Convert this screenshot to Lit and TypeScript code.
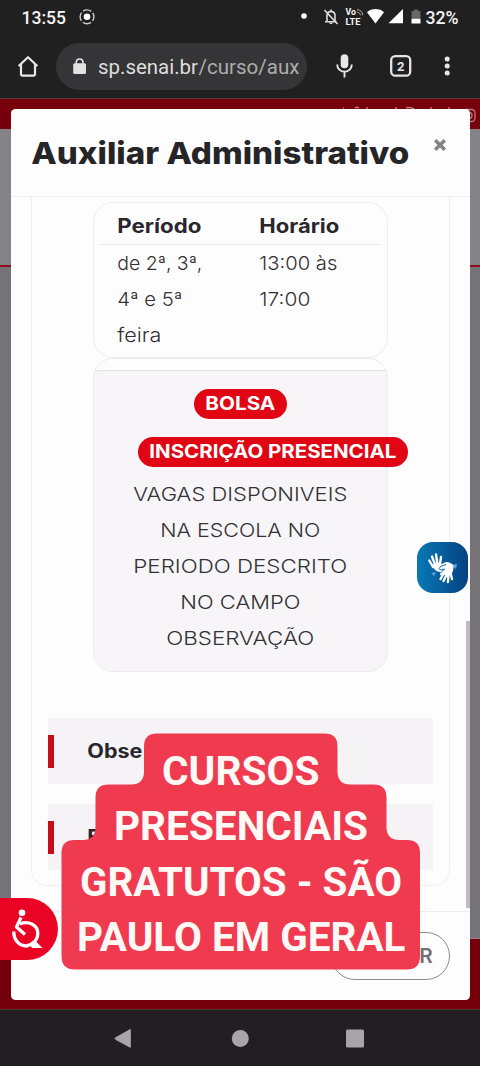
import { LitElement, html, svg, css } from "lit";
import { customElement } from "lit/decorators.js";

// One line of type set to an exact measure; `base` is the baseline inside the line box.
const line = (text: string, width: number, height: number, base: number, cls: string) => html`
  <svg class="line ${cls}" width=${width} height=${height}>
    <text x="-0.7" y=${base} textLength=${width + 1} lengthAdjust="spacingAndGlyphs">${text}</text>
  </svg>`;

@customElement("status-bar")
class StatusBar extends LitElement {
  static styles = css`
    :host { display: block; height: 33px; }
    svg { display: block; }
    text { font-family: Roboto, sans-serif; fill: #f4f4f4; }
    .clock { font-size: 18px; font-weight: 500; }
    .tiny { font-size: 9px; font-weight: 700; }
  `;
  render() {
    return html`<svg width="480" height="33" viewBox="0 0 480 33">
      <text class="clock" x="21.5" y="23.5" textLength="44.5" lengthAdjust="spacingAndGlyphs">13:55</text>
      <circle cx="87" cy="16.8" r="3.3" fill="#fff" />
      <circle cx="87" cy="16.8" r="6.9" fill="none" stroke="#cecece" stroke-width="1.4" stroke-dasharray="8.8 2.04" stroke-dashoffset="4.4" />
      <circle cx="304" cy="16" r="2.8" fill="#fff" />
      <g fill="none" stroke="#dcdcdc" stroke-width="1.6">
        <path d="M327 21.5V15.5C327 12.7 328.7 11.7 331 11.4C333.4 11.7 335 12.9 335 15.5V21.5M325 21.7H336.5M331 9.5V11.5" />
        <path d="M324.5 10L337.5 24" />
      </g>
      <path d="M329.3 22.5h3.4a1.7 1.7 0 0 1-3.4 0z" fill="#dcdcdc" />
      <text class="tiny" x="345.5" y="15" textLength="10.5" lengthAdjust="spacingAndGlyphs">Vo</text>
      <text class="tiny" x="345.5" y="24.9" textLength="15" lengthAdjust="spacingAndGlyphs">LTE</text>
      <path d="M357 9.7c3.3 0 5.6 2.2 5.8 5.6M357 12.2c2 0 3.2 1.2 3.4 3.1" fill="none" stroke="#aaa" stroke-width="1" />
      <path d="M367 12.2C371.5 8 379.5 8 384 12.2L375.5 23.5z" fill="#fff" />
      <path d="M403 9V23.3H388.5z" fill="#fff" />
      <path d="M411.5 11h2.5v-1.5h4V11h2.5v8h-9z" fill="#666" />
      <path d="M411.5 18.8h9v4.7h-9z" fill="#fff" />
      <text class="clock" x="425.5" y="23.5" textLength="33" lengthAdjust="spacingAndGlyphs">32%</text>
    </svg>`;
  }
}

@customElement("browser-bar")
class BrowserBar extends LitElement {
  static styles = css`
    :host { display: flex; height: 65px; box-sizing: border-box; padding: 10px 0 0 14px; align-items: flex-start; }
    svg { display: block; flex: none; }
    .address {
      flex: none; display: flex; box-sizing: border-box; width: 251px; height: 47px; margin: 0 24px 0 14px;
      padding-left: 16px; border-radius: 24px; background: #353537;
    }
    .address svg { overflow: hidden; }
    text { font: 20.5px Roboto, sans-serif; fill: #dedede; }
    .path { fill: #adadad; }
    .count { font-size: 13px; font-weight: 700; fill: #e5e5e5; }
  `;
  render() {
    return html`
      <svg width="28" height="47" viewBox="14 43 28 47">
        <path d="M18.6 66L28 57.2L37.4 66M21 64.5V74.3Q21 75.6 22.3 75.6H33.7Q35 75.6 35 74.3V64.5" fill="none" stroke="#e8e8e8" stroke-width="2.2" stroke-linejoin="round" />
      </svg>
      <div class="address">
        <svg width="26" height="47" viewBox="72 43 26 47">
          <rect x="73.2" y="63.3" width="12.8" height="10.7" rx="1.5" fill="#e2e2e2" />
          <path d="M76.3 64V62.3a3.3 3.3 0 0 1 6.6 0V64" fill="none" stroke="#e2e2e2" stroke-width="1.6" />
        </svg>
        <svg width="201" height="47" viewBox="98 43 201 47">
          <text x="98" y="74" textLength="100" lengthAdjust="spacingAndGlyphs">sp.senai.br</text>
          <text class="path" x="198.5" y="74" textLength="101" lengthAdjust="spacingAndGlyphs">/curso/aux</text>
        </svg>
      </div>
      <svg width="149" height="47" viewBox="331 43 149 47">
        <rect x="340.7" y="54.3" width="7.6" height="14" rx="3.8" fill="#e8e8e8" />
        <path d="M337.2 64.5a7.3 7.3 0 0 0 14.6 0M344.5 71.8V77.5" fill="none" stroke="#e8e8e8" stroke-width="1.9" />
        <rect x="391.2" y="56.2" width="19" height="19.5" rx="4" fill="none" stroke="#e5e5e5" stroke-width="2.3" />
        <text class="count" x="397" y="70.8">2</text>
        <g fill="#e8e8e8"><circle cx="447.2" cy="59" r="2.5" /><circle cx="447.2" cy="66" r="2.5" /><circle cx="447.2" cy="73" r="2.5" /></g>
      </svg>`;
  }
}

@customElement("course-modal")
class CourseModal extends LitElement {
  static styles = css`
    :host {
      display: flex; flex-direction: column; box-sizing: border-box;
      border-radius: 4.5px; background: #fefdfe; overflow: hidden;
    }
    .line { display: block; overflow: visible; flex: none; }
    text { font-family: Inter, "Open Sans", sans-serif; }
    .title { font-size: 30px; font-weight: 800; fill: #252427; }
    .bold { font-size: 19.5px; font-weight: 700; fill: #29272b; }
    .body { font-size: 19.3px; font-weight: 300; fill: #333135; }
    .chip { font-size: 18.6px; font-weight: 700; fill: #fff; }
    header {
      flex: none; display: flex; justify-content: space-between; box-sizing: border-box; height: 88px;
      padding: 25px 23px 0 21px; border-bottom: 1px solid #f1eff2;
    }
    .close { display: block; margin-top: 4px; }
    main { flex: none; display: flex; justify-content: space-between; height: 714px; padding-left: 20px; }
    .panel {
      box-sizing: border-box; width: 419px; height: 689px; border: 1px solid #f1eff4; border-top: 0;
      border-radius: 0 0 16px 16px; padding: 5px 15px 0 15px;
    }
    .track { width: 4.5px; padding-top: 424px; }
    .thumb { height: 287px; background: #bebcbf; }
    .times, .offer { box-sizing: border-box; width: 295px; margin-left: 46px; border: 1px solid #edeaf1; border-radius: 20px; }
    .times { height: 156px; padding: 0 5px 0 4px; }
    .row { display: grid; grid-template-columns: 142px 1fr; padding-left: 20px; }
    .head { height: 41px; border-bottom: 1px solid #eceaee; }
    .offer {
      height: 314px; display: flex; flex-direction: column; align-items: center; padding-top: 30px;
      background: linear-gradient(#fefdfe 11px, #e3e1e6 11px, #e3e1e6 12px, #f7f5f7 12px);
    }
    .pill { flex: none; display: flex; justify-content: center; height: 29.5px; border-radius: 15px; background: #e00613; }
    .grant { width: 93px; }
    .signup { width: 270px; margin: 18.5px 0 9.5px 64.5px; }
    .sections { display: flex; flex-direction: column; gap: 20px; margin: 46px 0 0 1px; }
    .section { display: flex; align-items: center; width: 385px; height: 66px; background: #f5f3f5; }
    .section::before { content: ""; width: 6px; height: 33px; margin-right: 34px; background: #c80b1b; }
    footer { flex: 1; box-sizing: border-box; border-top: 1px solid #efedf1; padding: 20px 20.5px 0 0; display: flex; justify-content: flex-end; }
    .dismiss {
      display: flex; justify-content: flex-end; box-sizing: border-box; width: 119px; height: 48px;
      border: 1px solid #8e898f; border-radius: 24px; background: none; padding: 0 16.5px 0 0;
    }
    .dismiss text { font-size: 19.5px; font-weight: 600; fill: #737075; }
  `;
  render() {
    return html`
      <header>
        ${line("Auxiliar Administrativo", 377, 40, 29.5, "title")}
        <svg class="close" width="13" height="14" viewBox="0 0 13 14"><path d="M1.2 2.2L10.8 11.8M10.8 2.2L1.2 11.8" stroke="#858286" stroke-width="3.5" /></svg>
      </header>
      <main>
        <section class="panel">
          <div class="times">
            <div class="row head">${line("Período", 83, 40, 30, "bold")}${line("Horário", 79, 40, 30, "bold")}</div>
            <div class="row">
              <div>${line("de 2ª, 3ª,", 84, 36, 25, "body")}${line("4ª e 5ª", 64, 36, 25, "body")}${line("feira", 43, 36, 25, "body")}</div>
              <div>${line("13:00 às", 77, 36, 25, "body")}${line("17:00", 50, 36, 25, "body")}</div>
            </div>
          </div>
          <div class="offer">
            <span class="pill grant">${line("BOLSA", 69, 29, 21, "chip")}</span>
            <span class="pill signup">${line("INSCRIÇÃO PRESENCIAL", 246, 29, 20.5, "chip")}</span>
            ${line("VAGAS DISPONIVEIS", 213, 36, 25, "body")}
            ${line("NA ESCOLA NO", 159, 36, 25, "body")}
            ${line("PERIODO DESCRITO", 213, 36, 25, "body")}
            ${line("NO CAMPO", 119, 36, 25, "body")}
            ${line("OBSERVAÇÃO", 147, 36, 25, "body")}
          </div>
          <div class="sections">
            <div class="section">${line("Obse", 54, 30, 22, "bold")}</div>
            <div class="section">${line("E", 12, 30, 22, "bold")}</div>
          </div>
        </section>
        <div class="track"><div class="thumb"></div></div>
      </main>
      <footer><button class="dismiss">${line("R", 12.5, 46, 29.5, "")}</button></footer>`;
  }
}

@customElement("app-root")
class AppRoot extends LitElement {
  static styles = css`
    :host { display: flex; flex-direction: column; position: relative; width: 480px; height: 1066px; overflow: hidden; background: #202021; }
    .page { flex: none; height: 912px; display: flex; flex-direction: column; background: #79787b; border-top: 1px solid #55393b; box-sizing: border-box; }
    .top { height: 30px; background: #76000b; display: flex; justify-content: flex-end; }
    .brand { height: 136px; background: #858387; border-bottom: 2px solid #900d1c; }
    .fill { flex: 1; background: #757377; }
    .foot { height: 72px; background: #75000b; border-top: 1px solid #91868a; border-bottom: 1px solid #4d3539; box-sizing: border-box; }
    course-modal { position: absolute; left: 11px; top: 109px; width: 459px; height: 891px; }
    .nav { flex: 1; background: #211f22; }
    .nav svg, .float { display: block; }
    .float { position: absolute; }
    .sign { left: 417px; top: 542px; }
    .access { left: 0; top: 898px; }
    .caption { left: 61px; top: 733px; }
    .caption text { font: 700 40.5px Roboto, sans-serif; fill: #fff9f5; }
  `;
  render() {
    const caption: [string, number, number, number][] = [
      ["CURSOS", 162, 784.5, 157.5],
      ["PRESENCIAIS", 114, 839.5, 254],
      ["GRATUTOS - SÃO", 80, 895.5, 322],
      ["PAULO EM GERAL", 77, 951, 328.5],
    ];
    return html`
      <status-bar></status-bar>
      <browser-bar></browser-bar>
      <div class="page">
        <div class="top">
          <svg width="140" height="30" viewBox="340 99 140 30">
            <path d="M343 108h1M355 108q2-1.500 4 0M366 108h2M395 108h2M406 107.800q4-1 8 1M430 108h2M448 108h2" fill="none" stroke="#b77b80" stroke-width="1.5" />
            <rect x="463.5" y="109.5" width="11.5" height="12" rx="3.5" fill="none" stroke="#b77b80" stroke-width="1.3" />
            <circle cx="469" cy="115.5" r="3" fill="none" stroke="#b77b80" stroke-width="1.3" />
          </svg>
        </div>
        <div class="brand"></div>
        <div class="fill"></div>
        <div class="foot"></div>
      </div>
      <div class="nav">
        <svg width="480" height="56" viewBox="0 1010 480 56" fill="#a7a5a8">
          <path d="M130.3 1029.5V1047.3L115.5 1039.3Q114.5 1038.5 115.5 1037.8z" stroke="#a7a5a8" stroke-linejoin="round" />
          <circle cx="240.3" cy="1038.4" r="8.5" />
          <rect x="346" y="1029.5" width="18" height="18" rx="1.5" />
        </svg>
      </div>
      <course-modal></course-modal>
      <svg class="float sign" width="51" height="51" viewBox="417 542 51 51">
        <defs><linearGradient id="blue"><stop offset="0" stop-color="#0878b5" /><stop offset="1" stop-color="#064183" /></linearGradient></defs>
        <rect x="417" y="542" width="51" height="51" rx="16" fill="url(#blue)" />
        <path d="M431 573l5-1-2 4zM451 565l6-1-1 5z" fill="#56a5dc" />
        <g stroke="#fff" stroke-linecap="round" stroke-width="2.4" fill="none">
          <path d="M433 567L429.3 560.5M435 564.500L432 556.500M437.500 564L436 554.500M440 564L441 557" />
          <path d="M444 573L440.500 579M446.500 575L443.500 581M448.500 575L448 582M450.500 573L452 579" />
        </g>
        <path d="M432.500 565Q437 561 440.500 564.500L446 562Q451 562 453.500 565.500Q454 570 451.500 574.500Q447 577 443 574L440 575.500L440.500 572Q434 572 432.500 565z" fill="#fff" />
        <path d="M446 564.500L440.500 566.500Q438 569 440.500 570L444.500 569L440.500 573" fill="none" stroke="#0869a8" stroke-width="1" />
      </svg>
      <svg class="float access" width="58" height="62" viewBox="0 898 58 62">
        <path d="M0 898H27A31 31 0 0 1 27 960H0z" fill="#eb0524" />
        <circle cx="22" cy="912.7" r="3.3" fill="#fff" />
        <g fill="none" stroke="#fff" stroke-width="3.3">
          <path d="M21 917.5L16.5 927L25 934.500" stroke-linejoin="round" />
          <path d="M20 924C28 920.500 37.800 924.500 37.800 933.500C37.800 938 36 940.500 33 943" />
          <path d="M13.800 931.500C13.500 940.500 20 946.200 26.500 946Q30 945.500 33.500 942.500" />
        </g>
        <path d="M35 940.500L42.500 948H32L30 944.500z" fill="#fff" />
      </svg>
      <svg class="float caption" width="360" height="237" viewBox="61 733 360 237">
        <path fill="#f03a50" d="M157 733.5H324.5Q337.5 733.5 337.5 746.5V771.5Q337.5 784.5 350.5 784.5H373.5Q386.5 784.5 386.5 797.5V827Q386.5 840 399.5 840H407Q420 840 420 853V956Q420 969.5 407 969.5H75Q61.5 969.5 61.5 956V853Q61.5 840 74.5 840H82.5Q95.5 840 95.5 827V797.5Q95.5 784.5 108.5 784.5H131Q144 784.5 144 771.5V746.5Q144 733.5 157 733.5z" />
        ${caption.map(([t, x, y, w]) => svg`<text x=${x} y=${y} textLength=${w} lengthAdjust="spacingAndGlyphs">${t}</text>`)}
      </svg>`;
  }
}
